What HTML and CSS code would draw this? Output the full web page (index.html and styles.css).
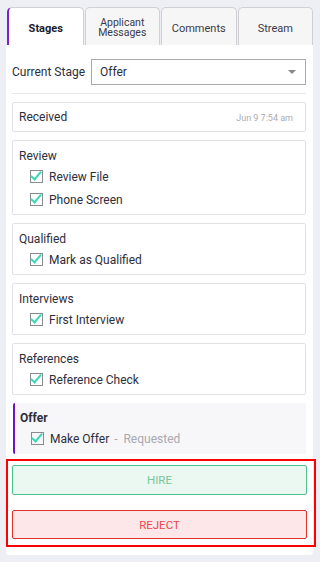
FILE: index.html
```html
<!DOCTYPE html>
<html lang="en">
  <head>
    <meta charset="UTF-8" />
    <meta name="viewport" content="width=device-width, initial-scale=1.0" />
    <title>Candidate Stages</title>
    <link rel="stylesheet" href="styles.css">
  </head>
  <body>
    <div class="wrap">
      <div class="tabs">
        <div class="tab active">Stages</div>
        <div class="tab two-line">Applicant<br />Messages</div>
        <div class="tab">Comments</div>
        <div class="tab">Stream</div>
      </div>

      <div class="panel">
        <div class="stage-row">
          <label>Current Stage</label>
          <div class="select">
            <span>Offer</span>
            <span class="caret"></span>
          </div>
        </div>
        <div class="divider"></div>

        <div class="card received">
          <span class="title">Received</span>
          <span class="date">Jun 9 7:54 am</span>
        </div>

        <div class="card">
          <div class="title">Review</div>
          <div class="item"><span class="check"></span>Review File</div>
          <div class="item"><span class="check"></span>Phone Screen</div>
        </div>

        <div class="card">
          <div class="title">Qualified</div>
          <div class="item"><span class="check"></span>Mark as Qualified</div>
        </div>

        <div class="card">
          <div class="title">Interviews</div>
          <div class="item"><span class="check"></span>First Interview</div>
        </div>

        <div class="card">
          <div class="title">References</div>
          <div class="item"><span class="check"></span>Reference Check</div>
        </div>

        <div class="card current">
          <div class="title">Offer</div>
          <div class="item"><span class="check"></span>Make Offer <span class="status">-&nbsp; Requested</span></div>
        </div>

        <div class="actions">
          <button class="btn hire">HIRE</button>
          <button class="btn reject">REJECT</button>
        </div>
      </div>
    </div>
  </body>
</html>
```

FILE: styles.css
```css
body {
  margin: 0;
  background-color: #eeeef5;
  font-family: Roboto, "Liberation Sans", sans-serif;
  color: #2e2e3a;
  font-size: 12px;
}

.wrap {
  padding: 7px 7px 7px 6px;
}

/* Tabs */
.tabs {
  display: flex;
  gap: 1px;
  margin-left: 1px;
}

.tab {
  flex: 1;
  height: 38px;
  box-sizing: border-box;
  display: flex;
  align-items: center;
  justify-content: center;
  text-align: center;
  padding-top: 3px;
  background-color: #f6f6f7;
  border: 1px solid #cfcfd4;
  border-bottom: none;
  border-radius: 5px 5px 0 0;
  font-size: 11px;
  color: #3a3a48;
}

.tab.two-line {
  font-size: 10.5px;
  line-height: 10px;
}

.tab.active {
  background-color: #fff;
  border-left: 2px solid #7a1fd0;
  font-weight: bold;
  color: #1c1c28;
}

/* Panel */
.panel {
  background-color: #fff;
  padding: 14px 7px 8px 6px;
  border-radius: 0 0 3px 3px;
}

.stage-row {
  display: flex;
  align-items: center;
}

.stage-row label {
  width: 79px;
}

.select {
  flex: 1;
  height: 26px;
  box-sizing: border-box;
  border: 1px solid #a9a9ae;
  display: flex;
  align-items: center;
  justify-content: space-between;
  padding: 0 9px 0 8px;
}

.caret {
  width: 0;
  height: 0;
  border-left: 4px solid transparent;
  border-right: 4px solid transparent;
  border-top: 4px solid #888;
}

.divider {
  height: 1px;
  background-color: #e8e8ec;
  margin: 8px 0;
}

/* Stage cards */
.card {
  border: 1px solid #e1e1e6;
  border-radius: 2px;
  padding: 7px 6px 3px;
  margin-bottom: 8px;
}

.card .title {
  line-height: 17px;
}

.card.received {
  display: flex;
  justify-content: space-between;
  align-items: center;
  padding: 6px 12px 5px 6px;
}

.date {
  font-size: 9px;
  color: #ababb2;
}

.item {
  display: flex;
  align-items: center;
  height: 23px;
  padding-left: 11px;
}

.check {
  width: 13px;
  height: 13px;
  box-sizing: border-box;
  border: 1.5px solid #8a8a8f;
  margin-right: 6px;
  position: relative;
}

.check::after {
  content: "";
  position: absolute;
  left: 2px;
  top: -2px;
  width: 4px;
  height: 9px;
  border-right: 2.5px solid #3ed8b8;
  border-bottom: 2.5px solid #3ed8b8;
  transform: rotate(40deg);
}

.status {
  color: #a9a9b0;
  margin-left: 5px;
}

.card.current {
  border: none;
  border-left: 2px solid #6b14c8;
  background-color: #f7f7f9;
  padding: 7px 6px 4px 5px;
  margin: 0 0 0 1px;
}

.card.current .title {
  font-weight: bold;
}

/* Action buttons */
.actions {
  border: 2px solid #ff0000;
  margin: 5px -10px 0 -6px;
  padding: 4px 7px 6px 4px;
  display: flex;
  flex-direction: column;
  gap: 15px;
}

.btn {
  height: 29px;
  font-family: inherit;
  font-size: 11.5px;
  border-radius: 2px;
  cursor: pointer;
}

.hire {
  height: 30px;
  background-color: #ebf7f1;
  border: 1px solid #4cc28a;
  color: #78c69a;
}

.reject {
  background-color: #fde7e8;
  border: 1px solid #e0302a;
  color: #e8474f;
}
```
